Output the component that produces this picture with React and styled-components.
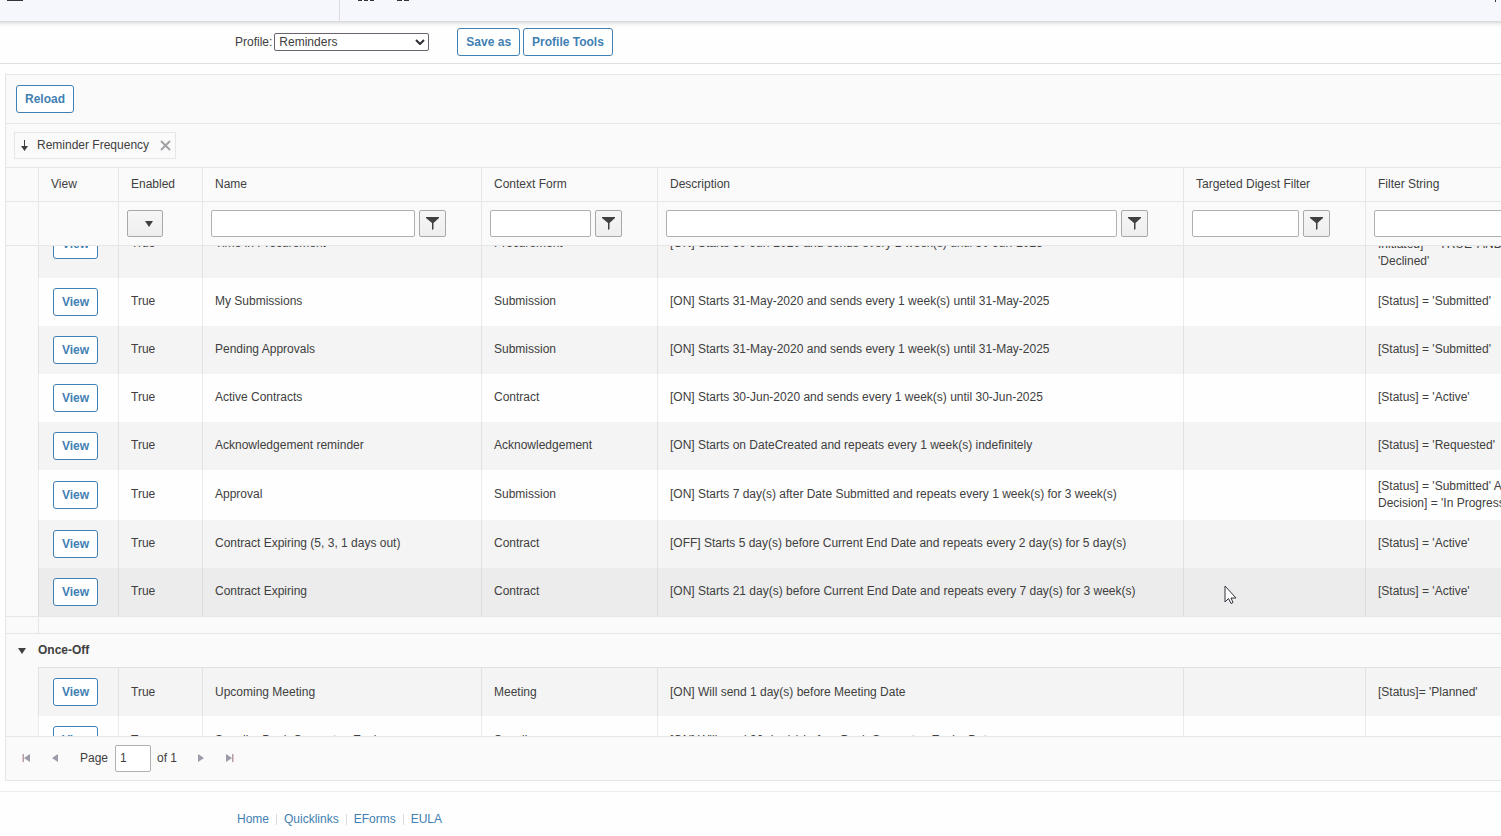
import React, { useLayoutEffect, useRef } from "react";
import styled, { createGlobalStyle } from "styled-components";

const line = "#e6e6e6";
const blue = "#4180b3";
const ink = "#404040";

const GlobalStyle = createGlobalStyle`
  *, *::before, *::after { box-sizing: border-box; }
  body {
    margin: 0;
    background: #fefefe;
    color: ${ink};
    font: 12px/17px "Liberation Sans", Arial, sans-serif;
  }
  button, input, select { font: inherit; color: inherit; }
`;

const Page = styled.div`
  min-height: 100vh;
  overflow: hidden;
`;

const TopBar = styled.header`
  display: flex;
  align-items: flex-end;
  height: 21px;
  overflow: hidden;
  background: #f6f7fd;
`;

const TopBarInner = styled.div`
  display: flex;
  flex: 1;
  align-items: center;
  height: 60px;
`;

const MenuArea = styled.div`
  display: flex;
  align-items: center;
  width: 340px;
  height: 100%;
  padding-left: 7px;
  border-right: 1px solid #dcdce2;
`;

const ToolArea = styled.div`
  display: flex;
  flex: 1;
  align-items: center;
  gap: 20px;
  padding: 0 4px 0 17px;
`;

const IconButton = styled.button`
  display: flex;
  padding: 0;
  border: 0;
  background: none;
  color: #33333d;
  margin-left: ${(p) => (p.$end ? "auto" : "0")};
`;

const ProfileBar = styled.div`
  display: flex;
  align-items: center;
  height: 43px;
  padding-left: 235px;
  border-bottom: 1px solid #dfdfdf;
  background: linear-gradient(#d6d6d9, #f1f1f1 3px, #fefefe 6px);
`;

const ProfileLabel = styled.label`
  display: flex;
  align-items: center;
  gap: 2px;
  margin-right: 28px;
`;

const SelectBox = styled.span`
  display: grid;
  align-items: center;
  & > * { grid-area: 1 / 1; }
  & > svg {
    justify-self: end;
    margin-right: 4px;
    pointer-events: none;
  }
`;

const ProfileSelect = styled.select`
  appearance: none;
  width: 155px;
  height: 18px;
  padding: 0 4px;
  border: 1px solid #6b6470;
  border-radius: 2px;
  background: #fff;
  color: ${ink};
  line-height: 16px;
`;

const OutlineButton = styled.button`
  display: block;
  height: 28px;
  padding: 0 8px;
  border: 1px solid ${blue};
  border-radius: 3px;
  background: #fff;
  color: ${blue};
  font-weight: bold;
  white-space: nowrap;
`;

const ProfileActions = styled.div`
  display: flex;
  gap: 3px;
`;

const Panel = styled.main`
  margin: 10px 0 10px 5px;
  border: 1px solid ${line};
  border-right: 0;
  background: #fafafa;
`;

const Toolbar = styled.div`
  display: flex;
  align-items: center;
  height: 49px;
  padding-left: 10px;
  border-bottom: 1px solid ${line};
`;

const GroupBar = styled.div`
  display: flex;
  align-items: center;
  height: 44px;
  padding-left: 8px;
  border-bottom: 1px solid ${line};
`;

const GroupChip = styled.div`
  display: flex;
  align-items: center;
  height: 27px;
  padding: 0 4px 0 6px;
  border: 1px solid ${line};
`;

const ChipText = styled.span`
  margin: 0 11px 0 9px;
`;

const ChipClose = styled.button`
  display: flex;
  padding: 0;
  border: 0;
  background: none;
  color: #a2a2a6;
`;

const Scroller = styled.div`
  height: calc(100vh - 268px);
  overflow: hidden;
`;

const Table = styled.table`
  width: 100%;
  min-width: 1639px;
  table-layout: fixed;
  border-collapse: separate;
  border-spacing: 0;
`;

const Head = styled.thead`
  position: sticky;
  top: 0;
  z-index: 1;
  background: #fafafa;
`;

const HeadCell = styled.th`
  height: 34px;
  padding: 0 0 1px 12px;
  border-bottom: 1px solid ${line};
  border-left: ${(p) => (p.$first ? "0" : `1px solid ${line}`)};
  font-weight: normal;
  text-align: left;
`;

const FilterCell = styled.td`
  height: 44px;
  padding: 0 8px;
  border-bottom: 1px solid ${line};
  border-left: ${(p) => (p.$first ? "0" : `1px solid ${line}`)};
`;

const FilterGroup = styled.div`
  display: flex;
  gap: 4px;
  padding-right: 27px;
`;

const FilterInput = styled.input`
  flex: 1;
  min-width: 0;
  height: 27px;
  padding: 0 5px;
  border: 1px solid #b0b0b0;
  border-radius: 2px;
  background: #fff;
`;

const FilterButton = styled.button`
  display: flex;
  align-items: center;
  justify-content: ${(p) => (p.$wide ? "flex-end" : "center")};
  width: ${(p) => (p.$wide ? "36px" : "27px")};
  height: 27px;
  padding: 0 ${(p) => (p.$wide ? "9px" : "0")} 0 0;
  border: 1px solid #a8a8a8;
  border-radius: 2px;
  background: linear-gradient(#f6f6f6, #eeeeee);
`;

const Row = styled.tr`
  background: ${(p) => (p.$hover ? "#ececec" : p.$alt ? "#f4f4f4" : "#fefefe")};
`;

const GutterCell = styled.td`
  background: #fafafa;
`;

const Cell = styled.td`
  height: 48px;
  padding: ${(p) => (p.$raised ? "7px 12px 9px" : "8px 12px")};
  border-left: 1px solid rgba(0, 0, 0, 0.07);
  vertical-align: middle;
`;

const ViewCell = styled(Cell)`
  padding: 0 14px;
`;

const SpacerCell = styled.td`
  height: 17px;
  border: 1px solid ${line};
  border-width: 1px 0 0 1px;
  &:first-child { border-left: 0; }
`;

const GroupCell = styled.td`
  height: 34px;
  padding: 0;
  border-top: 1px solid ${line};
`;

const GroupTitle = styled.div`
  display: flex;
  align-items: center;
  font-weight: bold;
`;

const GroupToggle = styled.button`
  display: flex;
  width: 32px;
  padding: 0 0 0 12px;
  border: 0;
  background: none;
`;

const RuleCell = styled.td`
  height: 1px;
  padding: 0;
  background: ${(p) => (p.$blank ? "transparent" : "#e0e0e0")};
`;

const Pager = styled.nav`
  display: flex;
  align-items: center;
  height: 44px;
  padding-left: 16px;
  border-top: 1px solid ${line};
`;

const PagerButton = styled.button`
  display: flex;
  padding: 0;
  border: 0;
  background: none;
  margin-right: ${(p) => p.$gap || 0}px;
`;

const PageField = styled.label`
  display: flex;
  align-items: center;
  gap: 7px;
  margin-right: 6px;
`;

const PageInput = styled.input`
  width: 36px;
  height: 27px;
  padding: 0 4px 2px;
  border: 1px solid #b0b0b0;
  border-radius: 2px;
  background: #fff;
`;

const PageTotal = styled.span`
  margin-right: 20px;
`;

const Footer = styled.footer`
  display: flex;
  height: 45px;
  padding: 19px 0 0 237px;
  border-top: 1px solid #ececec;
`;

const FooterLink = styled.a`
  color: ${blue};
  text-decoration: none;
  & + &::before {
    content: "";
    display: inline-block;
    width: 1px;
    height: 11px;
    margin: 0 7px;
    background: #dcdcdc;
    vertical-align: -2px;
  }
`;

const Pointer = styled.svg`
  position: absolute;
  left: 1224px;
  top: 585px;
  z-index: 2;
  pointer-events: none;
`;

const Caret = () => (
  <svg width="8" height="6" viewBox="0 0 8 6" aria-hidden="true">
    <path d="M0 0h8L4 6z" fill={ink} />
  </svg>
);

const Funnel = () => (
  <svg width="13" height="13" viewBox="0 0 13 13" aria-hidden="true">
    <path d="M0 0h13v1L7.500 6v6L6 13V6L0 1z" fill={ink} />
  </svg>
);

const Step = ({ back, end }) => (
  <svg width="9" height="9" viewBox="0 0 9 9" aria-hidden="true">
    <g transform={back ? "" : "matrix(-1 0 0 1 9 0)"}>
      <path d={end ? "M8 0v8L2 4z" : "M8 0v8L2 4z"} fill="#9c9ca8" />
      {end && <path d="M0 0h1v8H0z" fill="#e8c8c0" />}
      {end && <path d="M1 0h1v8H1z" fill="#a8a4ae" />}
    </g>
  </svg>
);

const widths = [32, 80, 84, 279, 176, 526, 182];
const headings = ["View", "Enabled", "Name", "Context Form", "Description", "Targeted Digest Filter", "Filter String"];

const recurring = [
  { name: "Time in Procurement", form: "Procurement", text: "[ON] Starts 30-Jun-2020 and sends every 1 week(s) until 30-Jun-2025", filter: ["[Status] = 'Submitted' AND [Is", "Initiated] = 'TRUE' AND [Status] <>", "'Declined'"] },
  { name: "My Submissions", form: "Submission", text: "[ON] Starts 31-May-2020 and sends every 1 week(s) until 31-May-2025", filter: ["[Status] = 'Submitted'"] },
  { name: "Pending Approvals", form: "Submission", text: "[ON] Starts 31-May-2020 and sends every 1 week(s) until 31-May-2025", filter: ["[Status] = 'Submitted'"] },
  { name: "Active Contracts", form: "Contract", text: "[ON] Starts 30-Jun-2020 and sends every 1 week(s) until 30-Jun-2025", filter: ["[Status] = 'Active'"] },
  { name: "Acknowledgement reminder", form: "Acknowledgement", text: "[ON] Starts on DateCreated and repeats every 1 week(s) indefinitely", filter: ["[Status] = 'Requested'"] },
  { name: "Approval", form: "Submission", text: "[ON] Starts 7 day(s) after Date Submitted and repeats every 1 week(s) for 3 week(s)", filter: ["[Status] = 'Submitted' AND [Approval", "Decision] = 'In Progress'"] },
  { name: "Contract Expiring (5, 3, 1 days out)", form: "Contract", text: "[OFF] Starts 5 day(s) before Current End Date and repeats every 2 day(s) for 5 day(s)", filter: ["[Status] = 'Active'"] },
  { name: "Contract Expiring", form: "Contract", text: "[ON] Starts 21 day(s) before Current End Date and repeats every 7 day(s) for 3 week(s)", filter: ["[Status] = 'Active'"], hover: true },
];

const onceOff = [
  { name: "Upcoming Meeting", form: "Meeting", text: "[ON] Will send 1 day(s) before Meeting Date", filter: ["[Status]= 'Planned'"] },
  { name: "Supplier Bank Guarantee Expiry", form: "Supplier", text: "[ON] Will send 30 day(s) before Bank Guarantee Expiry Date", filter: [] },
];

const ReminderRow = ({ item, alt, raised }) => (
  <Row $alt={alt} $hover={item.hover}>
    <GutterCell />
    <ViewCell>
      <OutlineButton type="button">View</OutlineButton>
    </ViewCell>
    <Cell $raised={raised}>True</Cell>
    <Cell $raised={raised}>{item.name}</Cell>
    <Cell $raised={raised}>{item.form}</Cell>
    <Cell $raised={raised}>{item.text}</Cell>
    <Cell />
    <Cell $raised={raised && item.filter.length === 1}>
      {item.filter.map((part) => (
        <div key={part}>{part}</div>
      ))}
    </Cell>
  </Row>
);

export default function App() {
  const scroller = useRef(null);

  useLayoutEffect(() => {
    scroller.current.scrollTop = 35;
  }, []);

  return (
    <Page>
      <GlobalStyle />
      <TopBar>
        <TopBarInner>
          <MenuArea>
            <IconButton type="button" aria-label="Menu">
              <svg width="16" height="20" viewBox="0 0 16 20">
                <path d="M0 5h16v2H0zM0 11h16v2H0zM0 18h16v2H0z" fill="currentColor" />
              </svg>
            </IconButton>
          </MenuArea>
          <ToolArea>
            <IconButton type="button" aria-label="Apps">
              <svg width="18" height="20" viewBox="0 0 18 20">
                <path d="M1 4h5v4H1zM7 4h4v4H7zM12 4h5v4h-5zM1 10h5v4H1zM7 10h4v4H7zM12 10h5v4h-5zM1 16h4v4H1zM7 16h4v4H7zM13 16h4v4h-4z" fill="currentColor" />
              </svg>
            </IconButton>
            <IconButton type="button" aria-label="Home">
              <svg width="16" height="20" viewBox="0 0 16 20">
                <path d="M8 4l8 7h-2v9H9v-5H7v5H2v-9H0z" fill="currentColor" />
              </svg>
            </IconButton>
            <IconButton type="button" $end aria-label="Search">
              <svg width="2" height="22" viewBox="0 0 2 22">
                <path d="M0 0h1v22H0z" fill="currentColor" />
              </svg>
            </IconButton>
          </ToolArea>
        </TopBarInner>
      </TopBar>

      <ProfileBar>
        <ProfileLabel>
          Profile:
          <SelectBox>
            <ProfileSelect defaultValue="Reminders">
              <option>Reminders</option>
            </ProfileSelect>
            <svg width="10" height="6" viewBox="0 0 10 6" aria-hidden="true">
              <path d="M1 1l4 4 4-4" fill="none" stroke="#2e2e36" strokeWidth="2" />
            </svg>
          </SelectBox>
        </ProfileLabel>
        <ProfileActions>
          <OutlineButton type="button">Save as</OutlineButton>
          <OutlineButton type="button">Profile Tools</OutlineButton>
        </ProfileActions>
      </ProfileBar>

      <Panel>
        <Toolbar>
          <OutlineButton type="button">Reload</OutlineButton>
        </Toolbar>
        <GroupBar>
          <GroupChip>
            <svg width="7" height="11" viewBox="0 0 7 11" aria-hidden="true">
              <path d="M3 0h1v6h3L3.500 11 0 6h3z" fill={ink} />
            </svg>
            <ChipText>Reminder Frequency</ChipText>
            <ChipClose type="button" aria-label="Remove grouping">
              <svg width="11" height="11" viewBox="0 0 11 11">
                <path d="M1 1l9 9M10 1l-9 9" stroke="currentColor" strokeWidth="2" />
              </svg>
            </ChipClose>
          </GroupChip>
        </GroupBar>

        <Scroller ref={scroller}>
          <Table>
            <colgroup>
              {widths.map((w) => (
                <col key={w} width={w} />
              ))}
              <col />
            </colgroup>
            <Head>
              <tr>
                <HeadCell $first aria-label="Group" />
                {headings.map((h) => (
                  <HeadCell key={h} scope="col">{h}</HeadCell>
                ))}
              </tr>
              <tr>
                <FilterCell $first />
                <FilterCell />
                <FilterCell>
                  <FilterButton type="button" $wide aria-label="Enabled filter">
                    <Caret />
                  </FilterButton>
                </FilterCell>
                {headings.slice(2).map((h) => (
                  <FilterCell key={h}>
                    <FilterGroup>
                      <FilterInput type="text" aria-label={h} />
                      <FilterButton type="button" aria-label={`${h} filter`}>
                        <Funnel />
                      </FilterButton>
                    </FilterGroup>
                  </FilterCell>
                ))}
              </tr>
            </Head>
            <tbody>
              {recurring.map((item, i) => (
                <ReminderRow key={item.name} item={item} alt={i % 2 === 0} raised />
              ))}
              <tr>
                <SpacerCell />
                <SpacerCell colSpan={7} />
              </tr>
              <tr>
                <GroupCell colSpan={8}>
                  <GroupTitle>
                    <GroupToggle type="button" aria-label="Collapse Once-Off">
                      <Caret />
                    </GroupToggle>
                    Once-Off
                  </GroupTitle>
                </GroupCell>
              </tr>
              <tr>
                <RuleCell $blank />
                <RuleCell colSpan={7} />
              </tr>
              {onceOff.map((item, i) => (
                <ReminderRow key={item.name} item={item} alt={i % 2 === 0} />
              ))}
            </tbody>
          </Table>
        </Scroller>

        <Pager aria-label="Pages">
          <PagerButton type="button" aria-label="First page" $gap={19}>
            <Step back end />
          </PagerButton>
          <PagerButton type="button" aria-label="Previous page" $gap={21}>
            <Step back />
          </PagerButton>
          <PageField>
            Page
            <PageInput type="text" defaultValue="1" />
          </PageField>
          <PageTotal>of 1</PageTotal>
          <PagerButton type="button" aria-label="Next page" $gap={19}>
            <Step />
          </PagerButton>
          <PagerButton type="button" aria-label="Last page">
            <Step end />
          </PagerButton>
        </Pager>
      </Panel>

      <Footer>
        <FooterLink href="#home">Home</FooterLink>
        <FooterLink href="#quicklinks">Quicklinks</FooterLink>
        <FooterLink href="#eforms">EForms</FooterLink>
        <FooterLink href="#eula">EULA</FooterLink>
      </Footer>

      <Pointer width="13" height="20" viewBox="0 0 13 20" aria-hidden="true">
        <path d="M1 1v16l3.500-3.500 2.500 5 2-1-2-4.500h5z" fill="#fff" stroke="#33333d" />
      </Pointer>
    </Page>
  );
}
